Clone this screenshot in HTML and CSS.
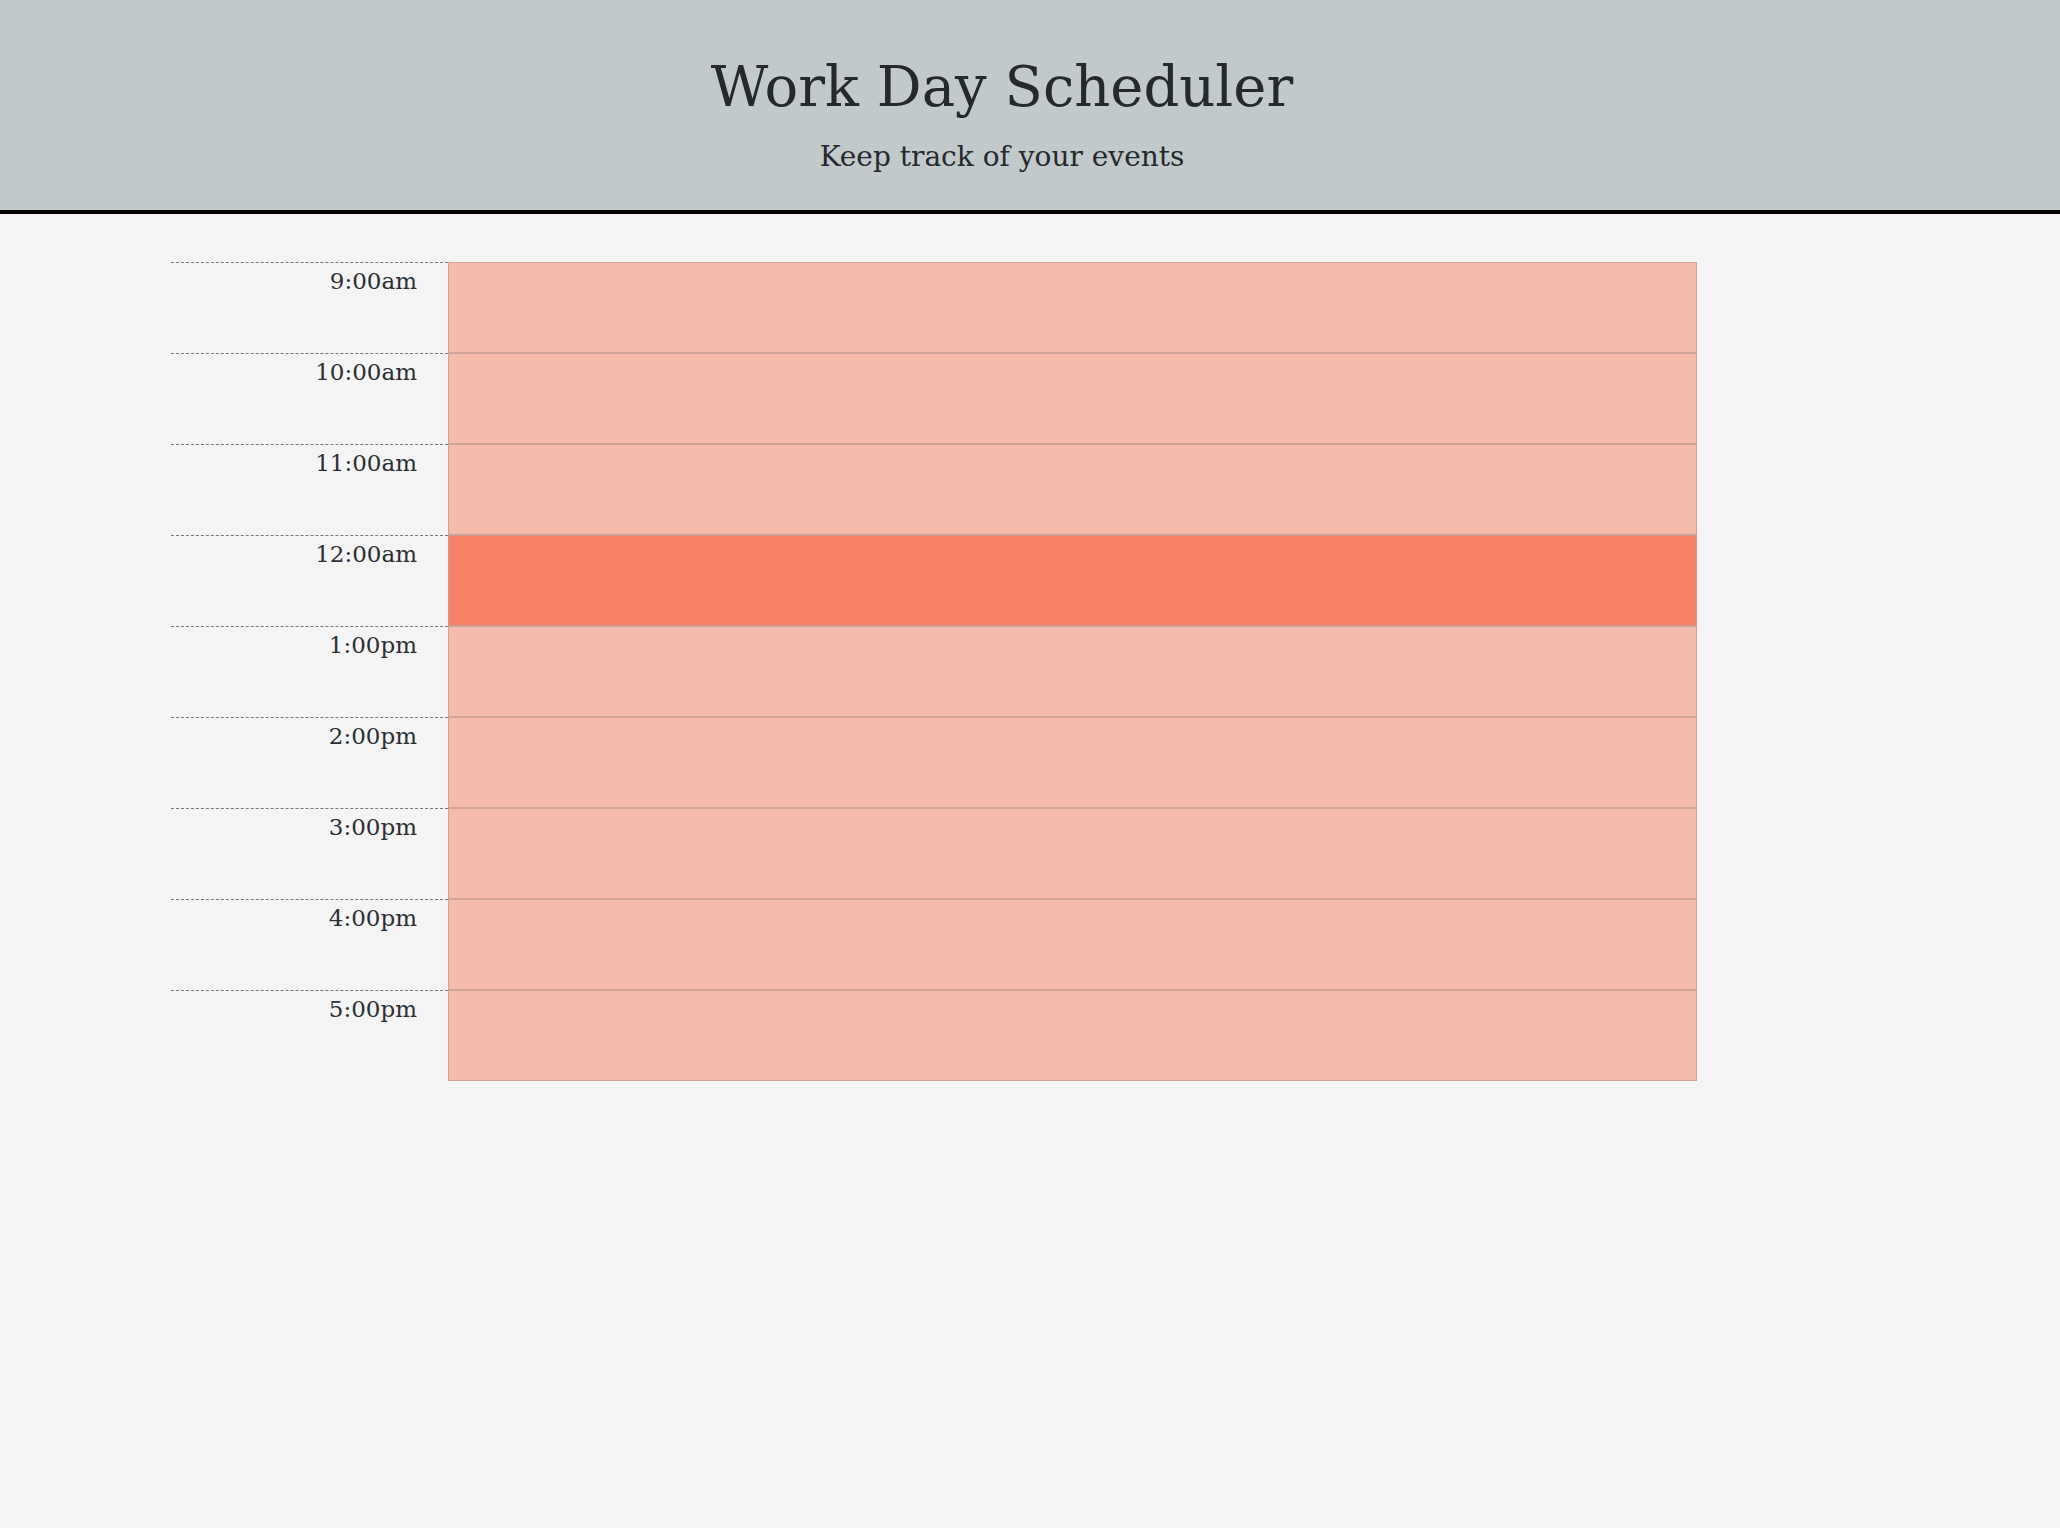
FILE: index.html
```html
<!DOCTYPE html>
<html lang="en">
<head>
<meta charset="utf-8">
<title>Work Day Scheduler</title>
<link rel="stylesheet" href="styles.css">
</head>
<body>
<header class="jumbotron">
  <h1 class="title">Work Day Scheduler</h1>
  <p class="lead">Keep track of your events</p>
</header>
<main class="container">
  <div class="row"><div class="hour">9:00am</div><textarea class="description past"></textarea></div>
  <div class="row"><div class="hour">10:00am</div><textarea class="description past"></textarea></div>
  <div class="row"><div class="hour">11:00am</div><textarea class="description past"></textarea></div>
  <div class="row"><div class="hour">12:00am</div><textarea class="description present"></textarea></div>
  <div class="row"><div class="hour">1:00pm</div><textarea class="description future"></textarea></div>
  <div class="row"><div class="hour">2:00pm</div><textarea class="description future"></textarea></div>
  <div class="row"><div class="hour">3:00pm</div><textarea class="description future"></textarea></div>
  <div class="row"><div class="hour">4:00pm</div><textarea class="description future"></textarea></div>
  <div class="row"><div class="hour">5:00pm</div><textarea class="description future"></textarea></div>
</main>
</body>
</html>
```
FILE: styles.css
```css
* { box-sizing: border-box; }

html, body {
  margin: 0;
  padding: 0;
}

body {
  background: #f4f4f4;
  color: #212529;
  font-family: "DejaVu Serif", "Liberation Serif", serif;
  min-height: 1528px;
}

.jumbotron {
  height: 214px;
  background: #c2c9ca;
  border-bottom: 4px solid #000;
  text-align: center;
  padding: 53px 56px 0 0;
}

.title {
  margin: 0;
  font-size: 56px;
  line-height: 1.2;
  font-weight: 400;
  color: #25292c;
  letter-spacing: 0;
}

.lead {
  margin: 20px 0 0;
  font-size: 28px;
  line-height: 1.2;
  color: #25292c;
}

.container {
  padding: 48px 0 0 171px;
  display: flex;
  flex-direction: column;
}

.row {
  display: flex;
  height: 91px;
}

.hour {
  width: 277px;
  border-top: 1px dashed #777;
  text-align: right;
  padding: 1px 31px 0 0;
  font-size: 23px;
  line-height: 1.5;
  color: #2b2f33;
}

.description {
  width: 1249px;
  height: 91px;
  margin: 0;
  padding: 0;
  resize: none;
  border: 1px solid #cfa497;
  outline: none;
  font-family: inherit;
}

.past, .future {
  background: #f5bcab;
}

.present {
  background: #f68267;
  border-color: #c89a8d;
}
```
